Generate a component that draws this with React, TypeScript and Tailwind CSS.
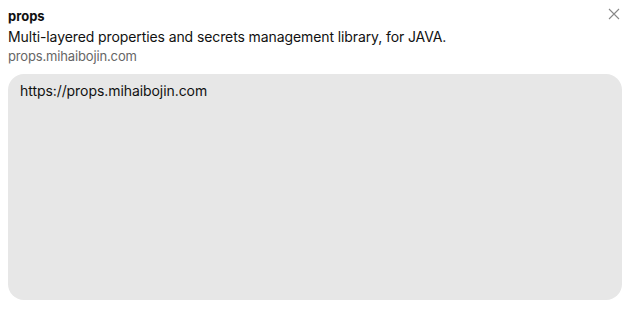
import React from "react";

export default function App() {
  return (
    <div
      className="w-[627px] h-[312px] bg-white flex flex-col px-2 pt-[6px] pb-[12px]"
      style={{ fontFamily: "Inter, 'Noto Sans', sans-serif" }}
    >
      <div className="flex items-start justify-between">
        <div className="flex flex-col">
          <div className="text-[13px] leading-[20px] font-bold text-[#111]">props</div>
          <div className="text-[14px] leading-[21px] tracking-[-0.1px] text-[#111]">
            Multi-layered properties and secrets management library, for JAVA.
          </div>
          <div className="text-[13px] leading-[19px] tracking-[-0.15px] text-[#666]">props.mihaibojin.com</div>
        </div>
        <button type="button" className="mt-[2px] mr-[-1px] text-[#888]">
          <svg width="12" height="12" viewBox="0 0 12 12" fill="none" stroke="currentColor" strokeWidth="1.1">
            <path d="M1 1L11 11M11 1L1 11" />
          </svg>
        </button>
      </div>
      <div className="mt-[8px] flex-1 mr-[-3px] rounded-[16px] bg-[#e7e7e7] px-3 pt-[7px]">
        <div className="text-[14px] leading-[20px] tracking-[-0.07px] text-[#111]">https://props.mihaibojin.com</div>
      </div>
    </div>
  );
}
